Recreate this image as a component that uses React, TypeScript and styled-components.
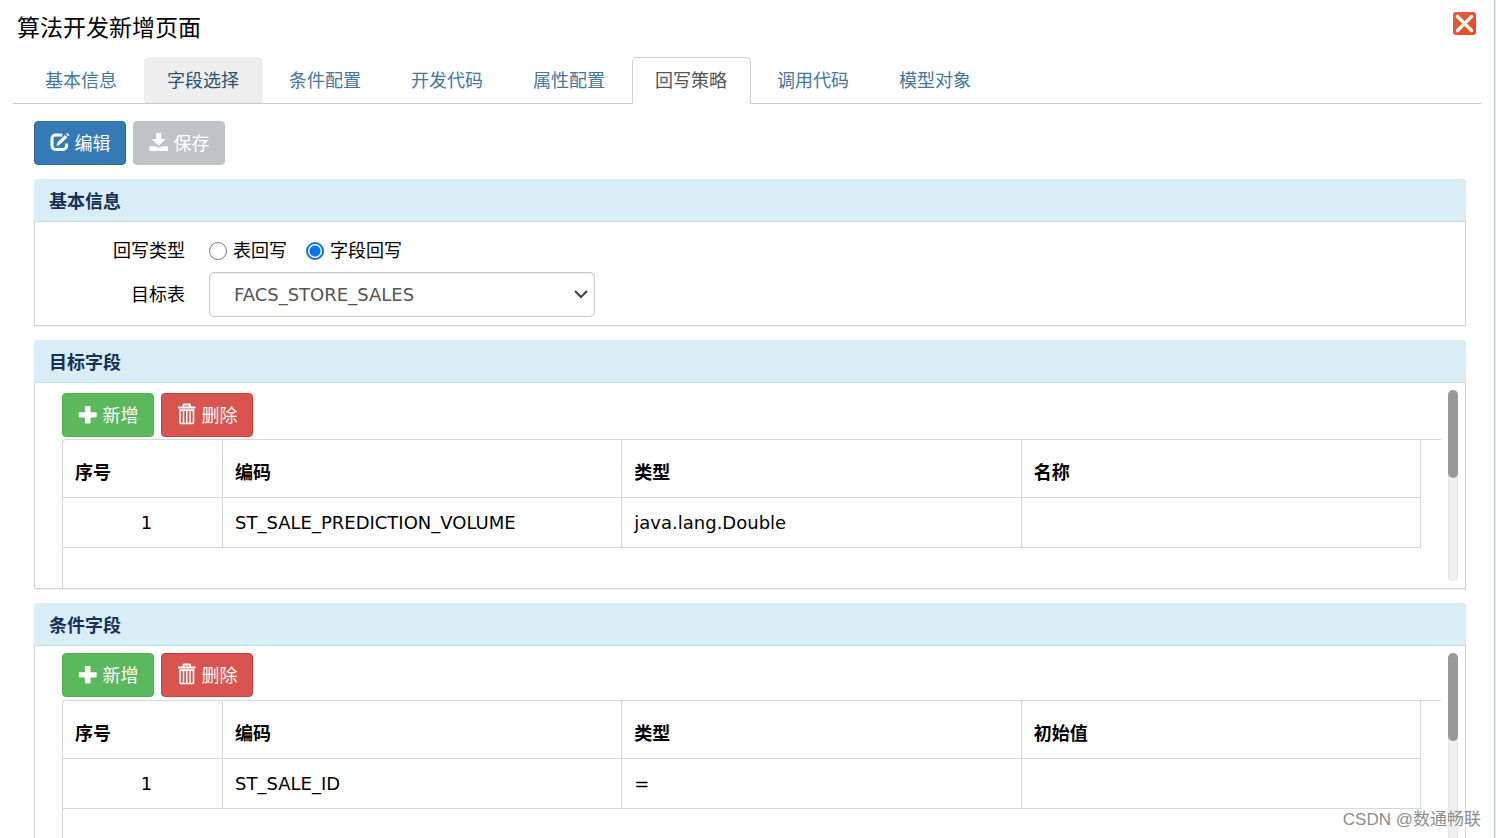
import React, { useState } from "react";
import styled, { createGlobalStyle, css } from "styled-components";

const GlobalStyle = createGlobalStyle`
  *, *::before, *::after { box-sizing: border-box; }
  body {
    margin: 0;
    background: #fff;
    color: #000;
    font-family: "DejaVu Sans", "Noto Sans CJK SC", sans-serif;
    font-size: 18px;
    line-height: 26px;
  }
  button, select, input { font: inherit; }
`;

const Page = styled.div`
  position: relative;
  height: 100vh;
  overflow: hidden;
  margin-right: 1px;
  padding: 10px 13px 0 13px;
  border-right: 1px solid #c6c9cb;
  box-shadow: 1px 0 #e0e8ea;
`;

const TitleBar = styled.header`
  display: flex;
  justify-content: space-between;
  align-items: flex-start;
  height: 47px;
  padding: 2px 4px 0 4px;
`;

const Title = styled.h1`
  margin: 0;
  font-size: 23px;
  font-weight: 400;
  line-height: 32px;
`;

const CloseButton = styled.button`
  width: 24px;
  height: 24px;
  padding: 0;
  border: 0;
  background: none;
  cursor: pointer;

  svg { display: block; }
`;

const Tabs = styled.nav`
  display: flex;
  gap: 3px;
  padding: 0 9px;
  border-bottom: 1px solid #c8c8c8;
`;

const Tab = styled.a<{ $state?: "hover" | "active" }>`
  display: flex;
  justify-content: center;
  min-width: 119px;
  height: 47px;
  margin-bottom: -1px;
  padding: 10px 1px 0 0;
  border: 1px solid transparent;
  border-radius: 5px 5px 0 0;
  color: #41779f;
  text-decoration: none;

  ${({ $state }) =>
    $state === "hover" &&
    css`
      background: #eee;
      border-color: #eee #eee #c8c8c8;
      color: #2a5274;
    `}
  ${({ $state }) =>
    $state === "active" &&
    css`
      background: #fff;
      border-color: #d0d0d0 #d0d0d0 #fff;
      color: #555;
    `}
`;

const Content = styled.main`
  padding: 17px 15px 0 21px;
`;

const ButtonRow = styled.div`
  display: flex;
  gap: 7px;
`;

const tones = {
  primary: ["#337ab7", "#2e6da4"],
  muted: ["#bfc3c6", "#bfc3c6"],
  success: ["#5cb85c", "#4cae4c"],
  danger: ["#d9534f", "#c9403c"],
};

const Button = styled.button<{ $tone: keyof typeof tones }>`
  display: inline-flex;
  align-items: center;
  justify-content: center;
  gap: 5px;
  width: 92px;
  height: 44px;
  padding: 2px 0 0;
  border: 1px solid ${({ $tone }) => tones[$tone][1]};
  border-radius: 4px;
  background: ${({ $tone }) => tones[$tone][0]};
  color: #fff;
  white-space: nowrap;
  cursor: pointer;

  svg { margin-bottom: 4px; }
`;

const Panel = styled.section`
  display: flex;
  flex-direction: column;
  margin-top: 14px;
  border: 1px solid #d0d3d4;
  border-top: 0;
  border-radius: 4px 4px 0 0;
  box-shadow: 0 1px 1px rgba(0, 0, 0, 0.05);
`;

const PanelTitle = styled.h2`
  height: 43px;
  margin: 0 -1px;
  padding: 10px 15px 0;
  border-bottom: 1px solid #c3e3ec;
  border-radius: 4px 4px 0 0;
  background: #d9edf7;
  color: #14305a;
  font-size: 18px;
  font-weight: 700;
  line-height: 26px;
`;

const Form = styled.div`
  display: grid;
  grid-template-columns: 150px 386px;
  column-gap: 24px;
  align-items: center;
  padding: 8px 0;
`;

const FieldLabel = styled.label`
  text-align: right;
`;

const RadioGroup = styled.div`
  display: flex;
  gap: 19px;
  height: 42px;
  align-items: center;
`;

const RadioLabel = styled.label`
  display: flex;
  align-items: center;
  gap: 6px;
`;

const Radio = styled.input`
  appearance: none;
  width: 18px;
  height: 18px;
  margin: 0;
  border: 1px solid #767676;
  border-radius: 50%;
  background: #fff;

  &:checked {
    border: 2px solid #0b73f0;
    background: radial-gradient(circle, #0b73f0 0 5px, #fff 6px);
  }
`;

const SelectBox = styled.div`
  position: relative;

  svg {
    position: absolute;
    right: 6px;
    top: 17px;
    pointer-events: none;
  }
`;

const Select = styled.select`
  appearance: none;
  display: block;
  width: 100%;
  height: 45px;
  padding: 0 24px;
  border: 1px solid #c8c8c8;
  border-radius: 5px;
  background: #fff;
  box-shadow: inset 0 1px 1px rgba(0, 0, 0, 0.08);
  color: #555;
`;

const ScrollBody = styled.div`
  display: flex;
  justify-content: space-between;
  height: 205px;
  padding: 0 7px 0 27px;
  overflow: hidden;
`;

const ScrollContent = styled.div<{ $inset: number; $gap: number }>`
  display: flex;
  flex: 1;
  flex-direction: column;
  gap: ${({ $gap }) => $gap}px;
  margin-right: 7px;
  padding-top: ${({ $inset }) => $inset}px;
`;

const ScrollTrack = styled.div`
  width: 10px;
  height: 191px;
  margin-top: 7px;
  border-radius: 5px;
  background: #f0f0f0;
  box-shadow: inset 0 0 2px rgba(0, 0, 0, 0.15);
`;

const ScrollThumb = styled.div`
  height: 88px;
  border-radius: 5px;
  background: #999;
`;

const TableFrame = styled.div`
  flex: 1;
  padding-right: 20px;
  border: solid #d6d6d6;
  border-width: 1px 0 0 1px;
  border-radius: 4px 0 0 0;
`;

const Table = styled.table`
  width: 100%;
  border-collapse: separate;
  border-spacing: 0;
  table-layout: fixed;

  th, td {
    padding: 0 12px;
    border: solid #d6d6d6;
    border-width: 0 1px 1px 0;
    text-align: left;
  }
  th {
    height: 58px;
    padding-top: 9px;
  }
  td { height: 50px; }
  th:first-child { width: 160px; }
  td:first-child {
    padding-left: 20px;
    text-align: center;
  }
`;

const Watermark = styled.div`
  position: absolute;
  right: 13px;
  bottom: 5px;
  color: #8d8d8d;
  font-family: "Liberation Sans", "Noto Sans CJK SC", sans-serif;
  font-size: 17px;
  text-shadow: 0 0 2px #fff;
`;

const CloseIcon = () => (
  <svg width="24" height="24" viewBox="0 0 24 24">
    <defs>
      <linearGradient id="close-red" x1="0" y1="0" x2="1" y2="1">
        <stop offset="0" stopColor="#d9604a" />
        <stop offset="1" stopColor="#ea4a1c" />
      </linearGradient>
    </defs>
    <rect width="23" height="23" rx="3" fill="url(#close-red)" />
    <path d="M4.500 4.500l14 14M18.500 4.500l-14 14" stroke="#fff6ec" strokeWidth="3.400" strokeLinecap="round" />
  </svg>
);

const EditIcon = () => (
  <svg width="20" height="20" viewBox="0 0 20 20" fill="none">
    <path d="M12.200 3H5.600A3.600 3.600 0 0 0 2 6.600v7.300a3.600 3.600 0 0 0 3.600 3.600h7.300a3.600 3.600 0 0 0 3.600-3.600V11.500" stroke="#fff" strokeWidth="3" />
    <path d="M15 3l2.300 2.300-7.300 7.300-3.600 1.300 1.200-3.600zM16 2l1.100-1.100 2.400 2.300-1.200 1.100z" fill="#fff" />
  </svg>
);

const SaveIcon = () => (
  <svg width="20" height="20" viewBox="0 0 20 20" fill="#fff">
    <path d="M7.200 1h5v6h4.600L9.700 13.800 2.600 7h4.600z" />
    <path d="M1 14.200h5.200l3.500 1.600 3.500-1.600h5.300a.5.5 0 0 1 .5.5v3.800a.5.5 0 0 1-.5.5H1a.5.5 0 0 1-.5-.5v-3.800a.5.5 0 0 1 .5-.5z" />
  </svg>
);

const PlusIcon = () => (
  <svg width="20" height="20" viewBox="0 0 20 20" fill="#fff">
    <path d="M7.700 2h4a.8.8 0 0 1 .8.800v5.400h5.400a.8.800 0 0 1 .8.800v3.800a.8.800 0 0 1-.8.800h-5.400v5.200a.8.800 0 0 1-.8.800h-4a.8.800 0 0 1-.8-.8v-5.200H1.500a.8.800 0 0 1-.8-.8V9a.8.800 0 0 1 .8-.8h5.400V2.800a.8.800 0 0 1 .8-.8z" />
  </svg>
);

const TrashIcon = () => (
  <svg width="20" height="22" viewBox="0 0 20 22" fill="none" stroke="#fff">
    <path d="M1 4.500h17.500" strokeWidth="2" />
    <path d="M6.500 4V1.500h6.500V4" strokeWidth="1.800" strokeLinejoin="round" />
    <path d="M3 7.200h13.500v12.300a1 1 0 0 1-1 1H4a1 1 0 0 1-1-1z" strokeWidth="1.700" />
    <path d="M6.500 8v12M9.750 8v12M13 8v12" strokeWidth="1.500" />
  </svg>
);

const ChevronIcon = () => (
  <svg width="16" height="11" viewBox="0 0 16 11" fill="none">
    <path d="M2 2l6 6 6-6" stroke="#444" strokeWidth="2.200" />
  </svg>
);

const tabNames = ["基本信息", "字段选择", "条件配置", "开发代码", "属性配置", "回写策略", "调用代码", "模型对象"];

interface FieldPanelProps {
  title: string;
  headers: string[];
  row: string[];
  inset: number;
  gap: number;
}

function FieldPanel({ title, headers, row, inset, gap }: FieldPanelProps) {
  return (
    <Panel>
      <PanelTitle>{title}</PanelTitle>
      <ScrollBody>
        <ScrollContent $inset={inset} $gap={gap}>
          <ButtonRow>
            <Button type="button" $tone="success"><PlusIcon />新增</Button>
            <Button type="button" $tone="danger"><TrashIcon />删除</Button>
          </ButtonRow>
          <TableFrame>
            <Table>
              <thead>
                <tr>{headers.map((h) => <th key={h} scope="col">{h}</th>)}</tr>
              </thead>
              <tbody>
                <tr>{row.map((cell, i) => <td key={i}>{cell}</td>)}</tr>
              </tbody>
            </Table>
          </TableFrame>
        </ScrollContent>
        <ScrollTrack><ScrollThumb /></ScrollTrack>
      </ScrollBody>
    </Panel>
  );
}

export default function App() {
  const [mode, setMode] = useState("field");
  return (
    <>
      <GlobalStyle />
      <Page>
        <TitleBar>
          <Title>算法开发新增页面</Title>
          <CloseButton type="button" aria-label="关闭"><CloseIcon /></CloseButton>
        </TitleBar>
        <Tabs>
          {tabNames.map((name, i) => (
            <Tab key={name} href="#" $state={i === 1 ? "hover" : i === 5 ? "active" : undefined}>{name}</Tab>
          ))}
        </Tabs>
        <Content>
          <ButtonRow>
            <Button type="button" $tone="primary"><EditIcon />编辑</Button>
            <Button type="button" $tone="muted"><SaveIcon />保存</Button>
          </ButtonRow>
          <Panel>
            <PanelTitle>基本信息</PanelTitle>
            <Form>
              <FieldLabel as="span" id="mode-label">回写类型</FieldLabel>
              <RadioGroup role="radiogroup" aria-labelledby="mode-label">
                <RadioLabel>
                  <Radio type="radio" name="mode" checked={mode === "table"} onChange={() => setMode("table")} />
                  表回写
                </RadioLabel>
                <RadioLabel>
                  <Radio type="radio" name="mode" checked={mode === "field"} onChange={() => setMode("field")} />
                  字段回写
                </RadioLabel>
              </RadioGroup>
              <FieldLabel htmlFor="target-table">目标表</FieldLabel>
              <SelectBox>
                <Select id="target-table"><option>FACS_STORE_SALES</option></Select>
                <ChevronIcon />
              </SelectBox>
            </Form>
          </Panel>
          <FieldPanel
            title="目标字段"
            headers={["序号", "编码", "类型", "名称"]}
            row={["1", "ST_SALE_PREDICTION_VOLUME", "java.lang.Double", ""]}
            inset={10}
            gap={2}
          />
          <FieldPanel
            title="条件字段"
            headers={["序号", "编码", "类型", "初始值"]}
            row={["1", "ST_SALE_ID", "=", ""]}
            inset={7}
            gap={3}
          />
        </Content>
        <Watermark>CSDN @数通畅联</Watermark>
      </Page>
    </>
  );
}
